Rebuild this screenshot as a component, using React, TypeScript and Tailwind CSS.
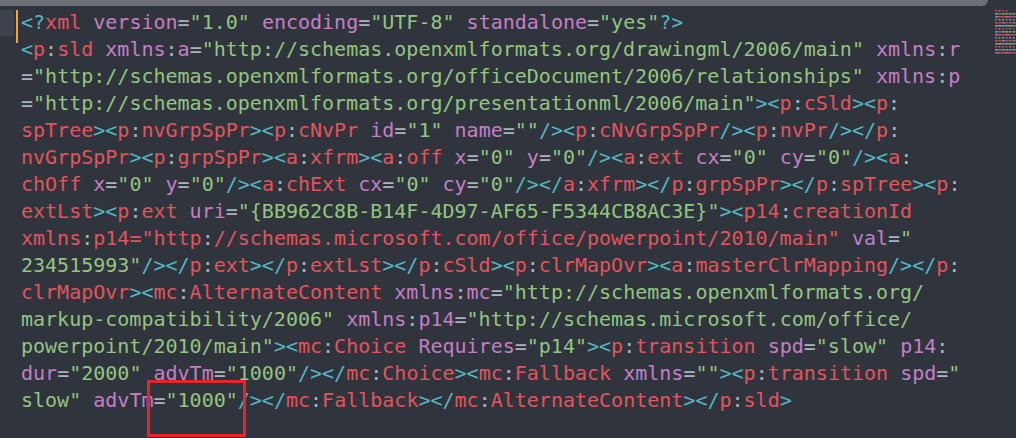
import React from "react";

const LINES = [
  `<?xml version="1.0" encoding="UTF-8" standalone="yes"?>`,
  `<p:sld xmlns:a="http://schemas.openxmlformats.org/drawingml/2006/main" xmlns:r`,
  `="http://schemas.openxmlformats.org/officeDocument/2006/relationships" xmlns:p`,
  `="http://schemas.openxmlformats.org/presentationml/2006/main"><p:cSld><p:`,
  `spTree><p:nvGrpSpPr><p:cNvPr id="1" name=""/><p:cNvGrpSpPr/><p:nvPr/></p:`,
  `nvGrpSpPr><p:grpSpPr><a:xfrm><a:off x="0" y="0"/><a:ext cx="0" cy="0"/><a:`,
  `chOff x="0" y="0"/><a:chExt cx="0" cy="0"/></a:xfrm></p:grpSpPr></p:spTree><p:`,
  `extLst><p:ext uri="{BB962C8B-B14F-4D97-AF65-F5344CB8AC3E}"><p14:creationId`,
  `xmlns:p14="http://schemas.microsoft.com/office/powerpoint/2010/main" val="`,
  `234515993"/></p:ext></p:extLst></p:cSld><p:clrMapOvr><a:masterClrMapping/></p:`,
  `clrMapOvr><mc:AlternateContent xmlns:mc="http://schemas.openxmlformats.org/`,
  `markup-compatibility/2006" xmlns:p14="http://schemas.microsoft.com/office/`,
  `powerpoint/2010/main"><mc:Choice Requires="p14"><p:transition spd="slow" p14:`,
  `dur="2000" advTm="1000"/></mc:Choice><mc:Fallback xmlns=""><p:transition spd="`,
  `slow" advTm="1000"/></mc:Fallback></mc:AlternateContent></p:sld>`,
];

type Kind = "punct" | "tag" | "attr" | "str" | "eq" | "plain";

const COLOR: Record<Kind, string> = {
  punct: "text-[#56b6c2]",
  tag: "text-[#e2555c]",
  attr: "text-[#c57fc6]",
  str: "text-[#94c57f]",
  eq: "text-[#abb2bf]",
  plain: "text-[#abb2bf]",
};

// colour every character of the whole document, then cut it back into lines
function highlight(src: string): Kind[] {
  const out: Kind[] = [];
  let state: "text" | "tagname" | "intag" | "string" = "text";
  for (let i = 0; i < src.length; i++) {
    const c = src[i];
    if (state === "string") {
      out.push("str");
      if (c === '"') state = "intag";
      continue;
    }
    if (c === "<") {
      out.push("punct");
      state = "tagname";
      if (src[i + 1] === "/" || src[i + 1] === "?") {
        out.push("punct");
        i++;
      }
      continue;
    }
    if (c === ">") {
      out.push("punct");
      state = "text";
      continue;
    }
    if ((c === "/" || c === "?") && src[i + 1] === ">") {
      out.push("punct");
      continue;
    }
    if (state === "tagname") {
      if (c === " ") {
        out.push("plain");
        state = "intag";
      } else out.push(c === ":" ? "eq" : "tag");
      continue;
    }
    if (state === "intag") {
      if (c === '"') {
        out.push("str");
        state = "string";
      } else if (c === "=" || c === ":" || c === " ") out.push("eq");
      else out.push("attr");
      continue;
    }
    out.push("plain");
  }
  return out;
}

function CodeLines() {
  const kinds = highlight(LINES.join(""));
  let offset = 0;
  return (
    <div className="flex flex-col">
      {LINES.map((line, li) => {
        const runs: { text: string; kind: Kind }[] = [];
        for (let i = 0; i < line.length; i++) {
          const k = kinds[offset + i];
          const last = runs[runs.length - 1];
          if (last && last.kind === k) last.text += line[i];
          else runs.push({ text: line[i], kind: k });
        }
        offset += line.length;
        return (
          <div key={li} className="h-[27px] leading-[27px] whitespace-pre">
            {runs.map((r, ri) => (
              <span key={ri} className={COLOR[r.kind]}>
                {r.text}
              </span>
            ))}
          </div>
        );
      })}
    </div>
  );
}

function Minimap() {
  const colors = ["#e2555c", "#94c57f", "#c57fc6", "#56b6c2", "#e2555c", "#94c57f"];
  return (
    <svg width="21" height="46" viewBox="0 0 21 46" className="opacity-75">
      {Array.from({ length: 15 }).map((_, row) =>
        Array.from({ length: 6 }).map((_, col) => {
          const w = 2 + ((row * 7 + col * 3) % 3);
          if (row === 0 && col > 3) return null;
          return (
            <rect
              key={`${row}-${col}`}
              x={col * 3.5}
              y={row * 3}
              width={w}
              height={1.6}
              fill={colors[(row + col * 2) % colors.length]}
            />
          );
        })
      )}
    </svg>
  );
}

export default function App() {
  return (
    <div className="relative flex flex-col w-[1016px] h-[438px] overflow-hidden bg-[#2f343d]">
      <div className="h-[6px] w-[988px] shrink-0 bg-[#6c6f76] rounded-br-md" />

      <div className="flex flex-1">
        <div className="w-[14px] shrink-0 pt-[4px]">
          <div className="h-[26px] bg-[#3d444e]" />
        </div>
        <div className="flex flex-1 pt-[3px] font-['DejaVu_Sans_Mono',monospace] text-[20px]">
          <div className="w-[2px] h-[33px] mt-[1px] ml-[2px] shrink-0 bg-[#f2a33a]" />
          <div className="pl-[3px]">
            <CodeLines />
          </div>
        </div>
        <div className="w-[21px] shrink-0 pt-[4px]">
          <Minimap />
        </div>
      </div>

      <div className="absolute left-[147px] top-[380px] w-[99px] h-[57px] border-[3px] border-[#e8242b]" />
    </div>
  );
}
